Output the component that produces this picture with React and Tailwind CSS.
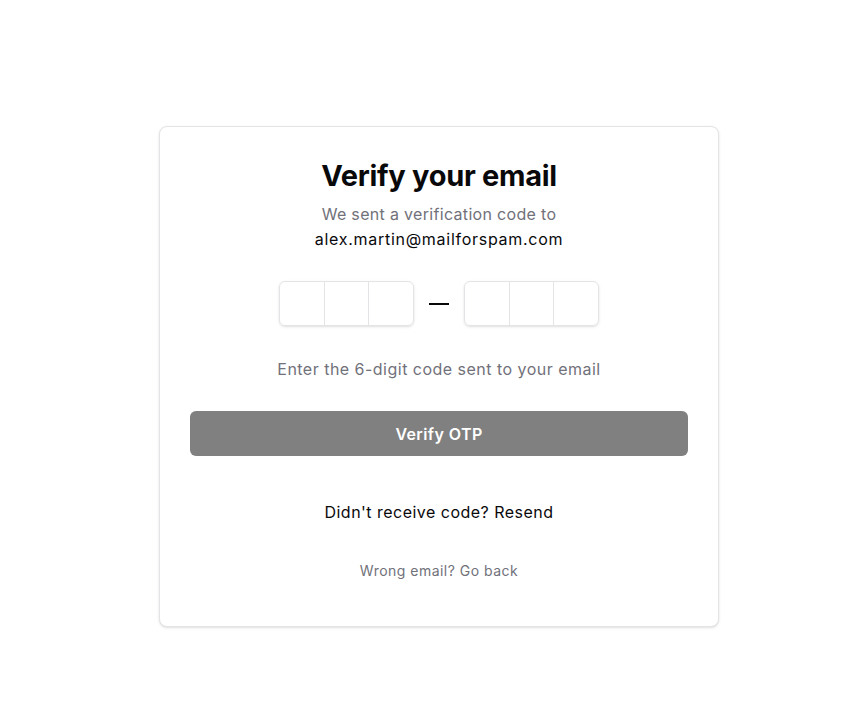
import React from "react";

function OtpGroup() {
  return (
    <div className="flex w-[135px] h-[45px] rounded-md border border-[#e4e4e7] shadow-sm">
      <div className="flex-1 h-full" />
      <div className="flex-1 h-full border-l border-[#e4e4e7]" />
      <div className="flex-1 h-full border-l border-[#e4e4e7]" />
    </div>
  );
}

export default function App() {
  return (
    <div
      className="min-h-screen w-full bg-white flex justify-center pt-[126px] pl-[14px]"
      style={{ fontFamily: "Inter, 'Noto Sans', sans-serif" }}
    >
      <div className="w-[560px] h-[501px] rounded-lg border border-[#e4e4e7] shadow-sm bg-white px-[30px] pt-[31px] flex flex-col items-center tracking-[0.03em]">
        <h1 className="text-[29px] leading-9 font-bold text-[#09090b] tracking-[-0.01em]">Verify your email</h1>
        <p className="mt-2 text-base leading-6 text-[#71717a] tracking-[0.02em]">We sent a verification code to</p>
        <p className="mt-px text-base leading-6 text-[#09090b] tracking-[0.045em]">alex.martin@mailforspam.com</p>

        <div className="mt-[30px] flex items-center gap-[15px]">
          <OtpGroup />
          <div className="w-5 h-[2px] bg-[#09090b]" />
          <OtpGroup />
        </div>

        <p className="mt-[31px] text-base leading-6 text-[#71717a]">Enter the 6-digit code sent to your email</p>

        <button className="mt-[30px] w-full h-[45px] rounded-md bg-[#808080] text-white text-base font-semibold tracking-[0.025em]">
          Verify OTP
        </button>

        <p className="mt-[44px] text-base leading-6 text-[#09090b]">Didn't receive code? Resend</p>

        <p className="mt-[37px] text-sm leading-5 text-[#71717a]">Wrong email? Go back</p>
      </div>
    </div>
  );
}
